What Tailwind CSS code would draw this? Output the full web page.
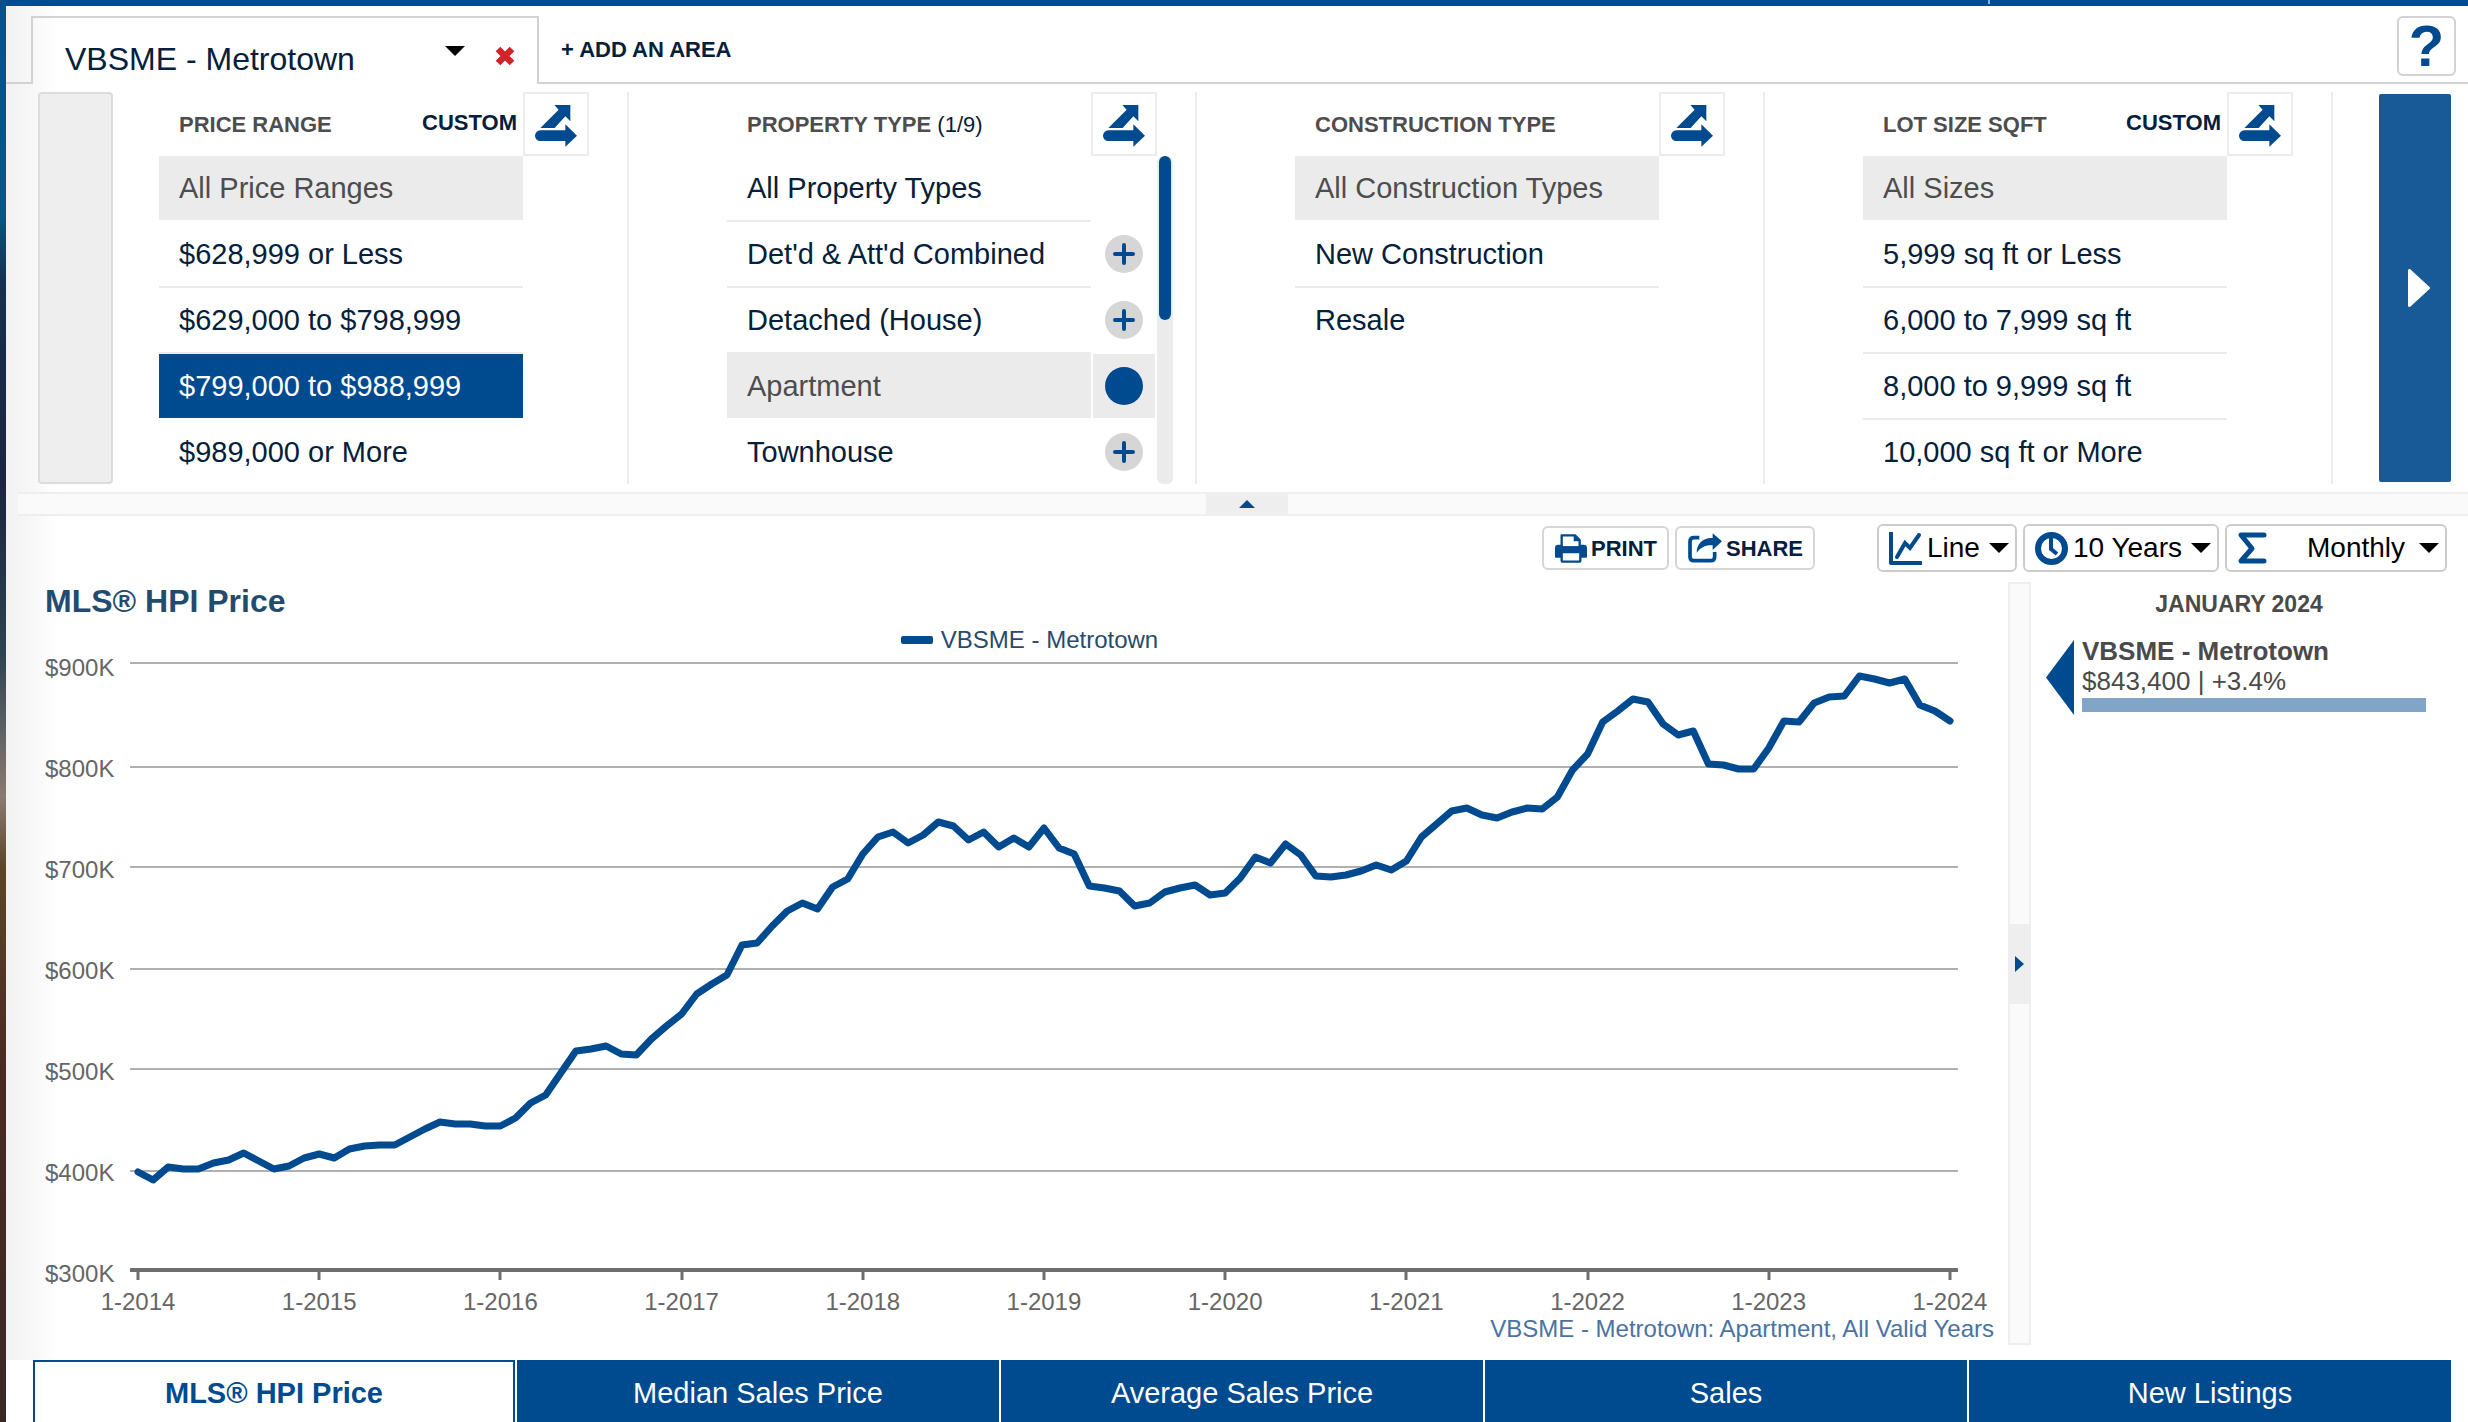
<!DOCTYPE html>
<html lang="en">
<head>
<meta charset="utf-8">
<meta name="viewport" content="width=device-width, initial-scale=1">
<title>Market Statistics - VBSME Metrotown</title>
<script src="https://cdn.jsdelivr.net/npm/@tailwindcss/browser@4"></script>
</head>
<body class="bg-[linear-gradient(to_bottom,#0b4f86_0%,#0b5580_15%,#16304e_20%,#1b2440_34%,#2c4450_46%,#8a7a74_56%,#5c4526_61%,#4a2a22_75%,#3a2822_100%)]">

<!-- Shared icon shapes -->
<svg class="hidden" aria-hidden="true">
  <symbol id="compare" viewBox="0 0 126 126"><path d="M58 0H106V49L91 34 59 69H16L71 14Z"/><path d="M16 76H91V58L126 92 91 125V108H16A16 16 0 0 1 16 76Z"/></symbol>
  <symbol id="caret" viewBox="0 0 20 10"><path d="M0 0H20L10 10Z"/></symbol>
  <symbol id="plus" viewBox="0 0 22 22"><path d="M11 2V20M2 11H20" fill="none" stroke="currentColor" stroke-width="4" stroke-linecap="round"/></symbol>
</svg>

<div class="flex h-screen flex-col overflow-hidden pl-[6px] font-['Liberation_Sans',Arial,sans-serif] text-[#04203a]">
  <div class="h-[6px] shrink-0 bg-[#004c8f]"><div class="ml-[80.5%] h-1 w-[2px] bg-[#7fb4e0]"></div></div>

  <div class="flex min-h-0 flex-1 flex-col bg-[linear-gradient(to_right,#f1f1f1,#fff_54px)]">

    <!-- Area tabs -->
    <header class="flex h-[78px] shrink-0 items-end">
      <div class="w-[25px] self-stretch border-b-2 border-[#d2d2d2]"></div>
      <div class="flex h-[68px] w-[508px] items-center border-2 border-b-0 border-[#d2d2d2] pl-8 pr-[22px]">
        <button class="flex flex-1 items-center justify-between pr-[30px]">
          <span class="pt-4 text-[32px] leading-10">VBSME - Metrotown</span>
          <svg class="h-[10px] w-5 fill-black"><use href="#caret"/></svg>
        </button>
        <button aria-label="Remove area" class="pt-[10px]"><svg viewBox="0 0 20 20" class="size-5"><path d="M3 3L17 17M17 3L3 17" fill="none" stroke="#d2232a" stroke-width="6.5"/></svg></button>
      </div>
      <div class="flex flex-1 items-start justify-between self-stretch border-b-2 border-[#d2d2d2] pl-[22px] pr-3 pt-[10px]">
        <button class="mt-5 text-[22px] leading-7 font-bold">+ ADD AN AREA</button>
        <button aria-label="Help" class="flex h-[60px] w-[59px] items-center justify-center rounded-md border-2 border-[#d2d2d2] bg-white text-[58px] leading-none font-bold text-[#004a8f]">?</button>
      </div>
    </header>

    <!-- Filters -->
    <section class="flex h-[408px] shrink-0 py-2 pl-8 pr-[17px]">
      <button aria-label="Previous filters" disabled class="w-[75px] shrink-0 rounded border-2 border-[#dcdcdc] bg-[#eee]"></button>
      <div class="flex min-w-0 flex-1 overflow-hidden">

        <div class="w-[516px] shrink-0 border-r-2 border-[#ebebeb] pl-[46px]">
          <div class="flex h-16 w-[430px] items-center pl-5 text-[22px] font-bold">
            <h2 class="flex-1 text-[#4d4d4d]">PRICE RANGE</h2>
            <button class="mr-[6px] pb-1">CUSTOM</button>
            <button aria-label="Compare price ranges" class="flex h-16 w-[66px] items-center justify-center border-2 border-[#ebebeb] bg-white pt-1"><svg class="size-[42px] fill-[#004a8f]"><use href="#compare"/></svg></button>
          </div>
          <ul class="w-[364px] text-[29px] leading-8">
            <li><button class="flex h-[66px] w-full items-center border-b-2 border-transparent bg-[#ebebeb] bg-clip-padding pl-5 text-[#4d4d4d]">All Price Ranges</button></li>
            <li><button class="flex h-[66px] w-full items-center border-b-2 border-[#ebebeb] pl-5">$628,999 or Less</button></li>
            <li><button class="flex h-[66px] w-full items-center border-b-2 border-[#ebebeb] pl-5">$629,000 to $798,999</button></li>
            <li><button class="flex h-[66px] w-full items-center border-b-2 border-transparent bg-[#004a8f] bg-clip-padding pl-5 text-white">$799,000 to $988,999</button></li>
            <li><button class="flex h-16 w-full items-center pl-5">$989,000 or More</button></li>
          </ul>
        </div>

        <div class="w-[568px] shrink-0 border-r-2 border-[#ebebeb] pl-[98px]">
          <div class="flex h-16 w-[430px] items-center pl-5 text-[22px]">
            <h2 class="flex-1"><b class="text-[#4d4d4d]">PROPERTY TYPE</b> (1/9)</h2>
            <button aria-label="Compare property types" class="flex h-16 w-[66px] items-center justify-center border-2 border-[#ebebeb] bg-white pt-1"><svg class="size-[42px] fill-[#004a8f]"><use href="#compare"/></svg></button>
          </div>
          <div class="flex gap-[2px]">
            <ul class="w-[428px] text-[29px] leading-8">
              <li class="flex gap-[2px]"><button class="flex h-[66px] w-[364px] items-center border-b-2 border-[#ebebeb] pl-5">All Property Types</button></li>
              <li class="flex gap-[2px]"><button class="flex h-[66px] w-[364px] items-center border-b-2 border-[#ebebeb] pl-5">Det'd &amp; Att'd Combined</button>
                <div class="flex h-16 w-[62px] items-center justify-center"><button aria-label="Add Combined" class="flex size-[38px] items-center justify-center rounded-full bg-[#d6d6d6] text-[#004a8f]"><svg class="size-[22px]"><use href="#plus"/></svg></button></div></li>
              <li class="flex gap-[2px]"><button class="flex h-[66px] w-[364px] items-center border-b-2 border-[#ebebeb] pl-5">Detached (House)</button>
                <div class="flex h-16 w-[62px] items-center justify-center"><button aria-label="Add Detached" class="flex size-[38px] items-center justify-center rounded-full bg-[#d6d6d6] text-[#004a8f]"><svg class="size-[22px]"><use href="#plus"/></svg></button></div></li>
              <li class="flex gap-[2px]"><button class="flex h-[66px] w-[364px] items-center border-b-2 border-transparent bg-[#ebebeb] bg-clip-padding pl-5 text-[#4d4d4d]">Apartment</button>
                <div class="flex h-16 w-[62px] items-center justify-center bg-[#ebebeb]"><button aria-label="Apartment selected" class="size-[38px] rounded-full bg-[#004a8f]"></button></div></li>
              <li class="flex gap-[2px]"><button class="flex h-16 w-[364px] items-center pl-5">Townhouse</button>
                <div class="flex h-16 w-[62px] items-center justify-center"><button aria-label="Add Townhouse" class="flex size-[38px] items-center justify-center rounded-full bg-[#d6d6d6] text-[#004a8f]"><svg class="size-[22px]"><use href="#plus"/></svg></button></div></li>
            </ul>
            <div class="flex w-4 justify-center rounded-md bg-[#ebebeb]"><div class="h-[164px] w-3 rounded-full bg-[#004a8f]"></div></div>
          </div>
        </div>

        <div class="w-[568px] shrink-0 border-r-2 border-[#ebebeb] pl-[98px]">
          <div class="flex h-16 w-[430px] items-center pl-5 text-[22px] font-bold">
            <h2 class="flex-1 text-[#4d4d4d]">CONSTRUCTION TYPE</h2>
            <button aria-label="Compare construction types" class="flex h-16 w-[66px] items-center justify-center border-2 border-[#ebebeb] bg-white pt-1"><svg class="size-[42px] fill-[#004a8f]"><use href="#compare"/></svg></button>
          </div>
          <ul class="w-[364px] text-[29px] leading-8">
            <li><button class="flex h-[66px] w-full items-center border-b-2 border-transparent bg-[#ebebeb] bg-clip-padding pl-5 text-[#4d4d4d]">All Construction Types</button></li>
            <li><button class="flex h-[66px] w-full items-center border-b-2 border-[#ebebeb] pl-5">New Construction</button></li>
            <li><button class="flex h-16 w-full items-center pl-5">Resale</button></li>
          </ul>
        </div>

        <div class="w-[568px] shrink-0 border-r-2 border-[#ebebeb] pl-[98px]">
          <div class="flex h-16 w-[430px] items-center pl-5 text-[22px] font-bold">
            <h2 class="flex-1 text-[#4d4d4d]">LOT SIZE SQFT</h2>
            <button class="mr-[6px] pb-1">CUSTOM</button>
            <button aria-label="Compare lot sizes" class="flex h-16 w-[66px] items-center justify-center border-2 border-[#ebebeb] bg-white pt-1"><svg class="size-[42px] fill-[#004a8f]"><use href="#compare"/></svg></button>
          </div>
          <ul class="w-[364px] text-[29px] leading-8">
            <li><button class="flex h-[66px] w-full items-center border-b-2 border-transparent bg-[#ebebeb] bg-clip-padding pl-5 text-[#4d4d4d]">All Sizes</button></li>
            <li><button class="flex h-[66px] w-full items-center border-b-2 border-[#ebebeb] pl-5">5,999 sq ft or Less</button></li>
            <li><button class="flex h-[66px] w-full items-center border-b-2 border-[#ebebeb] pl-5">6,000 to 7,999 sq ft</button></li>
            <li><button class="flex h-[66px] w-full items-center border-b-2 border-[#ebebeb] pl-5">8,000 to 9,999 sq ft</button></li>
            <li><button class="flex h-16 w-full items-center pl-5">10,000 sq ft or More</button></li>
          </ul>
        </div>
      </div>
      <button aria-label="Next filters" class="my-[2px] flex w-[72px] shrink-0 items-center justify-center rounded-[2px] bg-[#185a98] pl-2"><svg viewBox="0 0 22 38" class="h-[38px] w-[22px]"><path d="M1.500 1.500V36.500L20.500 19Z" fill="#fff" stroke="#fff" stroke-width="3" stroke-linejoin="round"/></svg></button>
    </section>

    <!-- Collapse bar -->
    <div class="ml-3 flex h-6 shrink-0 justify-center border-y-2 border-[#eee] bg-[#fafafa] pl-2">
      <button aria-label="Collapse filters" class="flex w-[82px] items-center justify-center bg-[#eee]"><svg viewBox="0 0 16 8" class="h-2 w-4"><path d="M0 8H16L8 0Z" fill="#004a8f"/></svg></button>
    </div>

    <!-- Toolbar -->
    <div class="flex h-14 shrink-0 items-center justify-end gap-[6px] pr-[21px] pt-2">
      <button class="flex h-11 w-[127px] items-center gap-1 rounded-md border-2 border-[#d6d6d6] bg-white pl-[11px] text-[22px] font-bold">
        <svg viewBox="0 0 96 87" class="h-[29px] w-8"><path d="M10 32H86Q96 32 96 42V68Q96 71 93 71H3Q0 71 0 68V42Q0 32 10 32Z" fill="#004a8f"/><path d="M20 40V4H60L74 18V40Z" fill="#fff" stroke="#004a8f" stroke-width="7" stroke-linejoin="round"/><path d="M56 2V22H76" fill="#004a8f"/><path d="M16 37H80V48H16Z" fill="#004a8f"/><rect x="20" y="54" width="56" height="29" rx="3" fill="#fff" stroke="#004a8f" stroke-width="7"/></svg>
        PRINT
      </button>
      <button class="mr-14 flex h-11 w-[140px] items-center gap-1 rounded-md border-2 border-[#d6d6d6] bg-white pl-[11px] text-[22px] font-bold">
        <svg viewBox="0 0 102 88" class="h-[30px] w-[34px]"><path d="M34 13H18Q6 13 6 25V70Q6 82 18 82H68Q80 82 80 70V56" fill="none" stroke="#004a8f" stroke-width="11"/><path d="M74 0L102 24 74 50V36C54 34 38 42 26 58C26 32 44 12 74 14Z" fill="#004a8f"/></svg>
        SHARE
      </button>
      <label class="flex h-12 w-[140px] items-center rounded-md border-2 border-[#ccc] bg-white pl-[10px] pr-[6px] text-[28px] text-black">
        <svg viewBox="0 0 33 33" class="size-[33px] shrink-0"><path d="M2 1V31H32" fill="none" stroke="#004a8f" stroke-width="4" stroke-linecap="round" stroke-linejoin="round"/><path d="M8 25L16 11L21 16L30 3" fill="none" stroke="#004a8f" stroke-width="4" stroke-linecap="round"/></svg>
        <select aria-label="Chart type" class="ml-[5px] min-w-0 flex-1 appearance-none bg-transparent"><option>Line</option></select>
        <svg class="h-[10px] w-5 shrink-0"><use href="#caret"/></svg>
      </label>
      <label class="flex h-12 w-[196px] items-center rounded-md border-2 border-[#ccc] bg-white pl-[10px] pr-[6px] text-[28px] text-black">
        <svg viewBox="0 0 33 33" class="size-[33px] shrink-0"><circle cx="16.500" cy="16.500" r="13.500" fill="none" stroke="#004a8f" stroke-width="6"/><path d="M16 6V17L22 22" fill="none" stroke="#004a8f" stroke-width="4"/></svg>
        <select aria-label="Time span" class="ml-[5px] min-w-0 flex-1 appearance-none bg-transparent"><option>10 Years</option></select>
        <svg class="h-[10px] w-5 shrink-0"><use href="#caret"/></svg>
      </label>
      <label class="flex h-12 w-[222px] items-center rounded-md border-2 border-[#ccc] bg-white pl-[10px] pr-[6px] text-[28px] text-black">
        <svg viewBox="0 0 30 33" class="h-[33px] w-[30px] shrink-0"><path d="M27 3H4L15 16.500L4 29H27" fill="none" stroke="#004a8f" stroke-width="5" stroke-linecap="round" stroke-linejoin="round"/></svg>
        <select aria-label="Period" class="ml-[40px] min-w-0 flex-1 appearance-none bg-transparent"><option>Monthly</option></select>
        <svg class="h-[10px] w-5 shrink-0"><use href="#caret"/></svg>
      </label>
    </div>

    <!-- Chart and summary -->
    <main class="flex min-h-0 flex-1 pb-[15px] pr-[21px] pt-[10px]">
      <section class="flex min-w-0 flex-1 flex-col pb-[3px] pl-[39px] pr-[14px] text-[24px]">
        <h1 class="text-[32px] leading-[38px] font-bold text-[#234b6e]">MLS® HPI Price</h1>
        <div class="flex h-10 items-center justify-center gap-2 pl-5 text-[#274b6d]"><span class="h-2 w-8 rounded-[2px] bg-[#004a8f]"></span>VBSME - Metrotown</div>
        <div class="flex min-h-0 flex-1 pr-9">
          <div class="flex w-[85px] shrink-0 flex-col justify-between leading-4 text-[#666]">
            <span>$900K</span><span>$800K</span><span>$700K</span><span>$600K</span><span>$500K</span><span>$400K</span><span>$300K</span>
          </div>
          <div class="min-w-0 flex-1">
            <svg viewBox="0 660 1828 622" preserveAspectRatio="none" class="block size-full" role="img" aria-label="HPI price by month">
              <path d="M0 663H1828M0 767H1828M0 867H1828M0 969H1828M0 1069H1828M0 1171H1828" stroke="#b0b0b0" stroke-width="2"/>
              <path d="M0 1270H1828" stroke="#6e6e6e" stroke-width="4"/>
              <path id="ticks" stroke="#6e6e6e" stroke-width="3"/>
              <polyline id="series" fill="none" stroke="#004a8f" stroke-width="7" stroke-linejoin="round" stroke-linecap="round"/>
            </svg>
          </div>
        </div>
        <div class="mt-[6px] flex justify-between pl-[93px] pr-11 leading-7 whitespace-nowrap text-[#666]">
          <span class="flex w-0 justify-center">1-2014</span><span class="flex w-0 justify-center">1-2015</span><span class="flex w-0 justify-center">1-2016</span><span class="flex w-0 justify-center">1-2017</span><span class="flex w-0 justify-center">1-2018</span><span class="flex w-0 justify-center">1-2019</span><span class="flex w-0 justify-center">1-2020</span><span class="flex w-0 justify-center">1-2021</span><span class="flex w-0 justify-center">1-2022</span><span class="flex w-0 justify-center">1-2023</span><span class="flex w-0 justify-center">1-2024</span>
        </div>
        <p class="text-right leading-[26px] text-[#4a73a3]">VBSME - Metrotown: Apartment, All Valid Years</p>
      </section>

      <div class="flex w-[23px] flex-col justify-center border-2 border-[#eee] bg-[#fafafa]">
        <button aria-label="Collapse summary" class="flex h-20 items-center justify-center bg-[#eee]"><svg viewBox="0 0 9 16" class="h-4 w-[9px]"><path d="M0 0V16L9 8Z" fill="#004a8f"/></svg></button>
      </div>

      <aside class="w-[416px] text-[#4a4a4a]">
        <h2 class="pt-[6px] text-center text-[23px] leading-8 font-bold">JANUARY 2024</h2>
        <div class="mt-5 flex gap-2 pl-[15px] pr-[21px]">
          <svg viewBox="0 0 28 75" class="h-[75px] w-7 shrink-0"><path d="M28 0V75L0 37.500Z" fill="#004a8f"/></svg>
          <div class="flex-1 text-[26px] leading-[30px]">
            <div class="-mt-1 font-bold">VBSME - Metrotown</div>
            <div>$843,400 | +3.4%</div>
            <div class="mt-[2px] h-[14px] bg-[#80a5c7]"></div>
          </div>
        </div>
      </aside>
    </main>

    <!-- Metric tabs -->
    <nav class="grid shrink-0 grid-cols-5 gap-[2px] bg-white pl-[27px] pr-[17px] text-center text-[29px] leading-[58px]">
      <a href="#hpi" class="h-[62px] border-2 border-b-0 border-[#004a8f] pt-[2px] font-bold text-[#004a8f]">MLS® HPI Price</a>
      <a href="#median" class="h-[62px] bg-[#004a8f] pt-1 text-white">Median Sales Price</a>
      <a href="#average" class="h-[62px] bg-[#004a8f] pt-1 text-white">Average Sales Price</a>
      <a href="#sales" class="h-[62px] bg-[#004a8f] pt-1 text-white">Sales</a>
      <a href="#listings" class="h-[62px] bg-[#004a8f] pt-1 text-white">New Listings</a>
    </nav>
  </div>
</div>

<script>
  // One value per month, January 2014 to January 2024, in plot units.
  const months = [
    1172,1180,1167,1169,1169,1163,1160,1153,1161,1169,1166,1158,
    1154,1158,1149,1146,1145,1145,1137,1129,1122,1124,1124,1126,
    1126,1118,1103,1095,1073,1051,1049,1046,1054,1055,1039,1026,
    1014,994,984,975,945,943,926,911,903,909,887,879,
    854,837,832,843,835,822,826,840,832,847,838,847,
    828,848,854,886,888,891,906,903,892,888,885,895,
    893,878,857,863,844,855,876,877,875,871,865,870,
    861,837,824,811,808,815,818,812,808,809,797,770,
    754,722,711,699,702,724,735,731,764,765,769,769,
    748,721,722,703,697,696,676,679,683,679,705,711,
    721];
  const step = 1812 / (months.length - 1);
  document.getElementById('series').setAttribute('points', months.map((y, i) => (8 + i * step) + ',' + y).join(' '));
  document.getElementById('ticks').setAttribute('d', Array.from({length: 11}, (_, k) => 'M' + Math.round(8 + k * 12 * step) + ' 1272V1280').join(''));
</script>
</body>
</html>
